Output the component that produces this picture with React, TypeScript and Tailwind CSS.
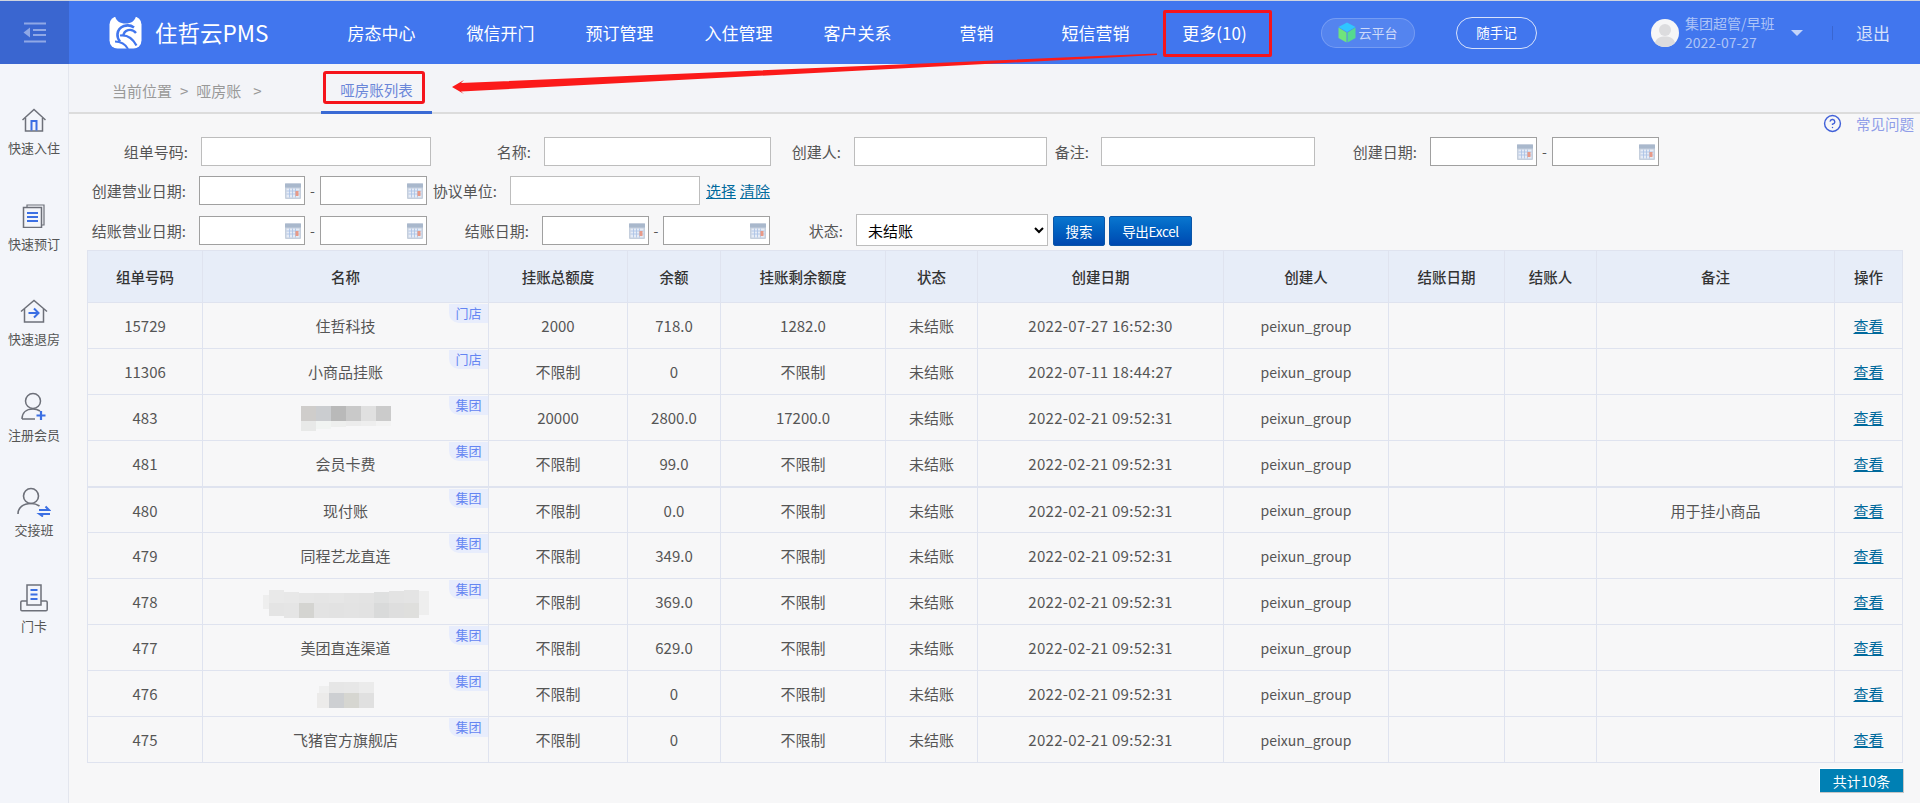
import React from 'react';
import { CircleHelp } from 'lucide-react';

const navItems = ['房态中心', '微信开门', '预订管理', '入住管理', '客户关系', '营销', '短信营销', '更多(10)'];

const GRAY = '#6d7079';
const BLUE = '#3b6fe3';

const HomeIcon = () => (
  <svg width="26" height="24" viewBox="0 0 26 24" fill="none">
    <path d="M1.5 12 13 1.5 24.5 12" stroke={GRAY} strokeWidth="1.5" />
    <path d="M4.5 10v13h17V10" stroke={GRAY} strokeWidth="1.5" />
    <path d="M10.5 22.5V13h5v9.5" stroke={BLUE} strokeWidth="2" />
  </svg>
);

const BookIcon = () => (
  <svg width="24" height="24" viewBox="0 0 24 24" fill="none">
    <path d="M5 3V1h17v20h-2" stroke={GRAY} strokeWidth="1.2" />
    <rect x="1.5" y="3.5" width="18" height="20" stroke={GRAY} strokeWidth="1.5" />
    <path d="M5 9h11M5 13h11M5 17h11" stroke={BLUE} strokeWidth="2" />
  </svg>
);

const CheckoutIcon = () => (
  <svg width="28" height="24" viewBox="0 0 28 24" fill="none">
    <path d="M1 12.5 14 1.5l13 11" stroke={GRAY} strokeWidth="1.5" />
    <path d="M4.5 10v13h19V10" stroke={GRAY} strokeWidth="1.5" />
    <path d="M8.5 14h9M14 9.5l4.5 4.5-4.5 4.500" stroke={BLUE} strokeWidth="2" />
  </svg>
);

const AddUserIcon = () => (
  <svg width="26" height="29" viewBox="0 0 26 29" fill="none">
    <circle cx="12" cy="9" r="7.5" stroke={GRAY} strokeWidth="1.5" />
    <path d="M1 27c0-6 4-10 11-10 3 0 5 .7 7 2M1 27h13" stroke={GRAY} strokeWidth="1.5" />
    <path d="M20 19v9M15.5 23.5h9" stroke={BLUE} strokeWidth="2.2" />
  </svg>
);

const ShiftIcon = () => (
  <svg width="34" height="30" viewBox="0 0 34 30" fill="none">
    <circle cx="14" cy="9" r="7.5" stroke={GRAY} strokeWidth="1.6" />
    <path d="M1 27c0-6.500 5-10.500 13-10.500 3.500 0 6 .8 8.500 2.500" stroke={GRAY} strokeWidth="1.6" />
    <path d="M22 23h10l-3.500-3.500M33 27H22.500l3.500 2.500" stroke={BLUE} strokeWidth="2" />
  </svg>
);

const CardIcon = () => (
  <svg width="28" height="28" viewBox="0 0 28 28" fill="none">
    <path d="M7 17H2c-.8 0-1.200.6-1.200 1.200v7.300c0 .8.600 1.300 1.200 1.300h24c.8 0 1.200-.6 1.200-1.300v-7.300c0-.7-.4-1.200-1.200-1.200h-5" stroke={GRAY} strokeWidth="1.5" />
    <path d="M7 21V1h14v20H7Z" stroke={GRAY} strokeWidth="1.500" />
    <path d="M10.500 6h7M10.500 10.500h7M10.500 15h7" stroke={BLUE} strokeWidth="1.800" />
  </svg>
);

const CalendarIcon = () => (
  <svg width="16" height="16" viewBox="0 0 16 16">
    <rect x="0" y="0.5" width="16" height="15.500" rx="1" fill="#c5cfdd" />
    <rect x="0" y="0.5" width="16" height="4" fill="#a9b8cc" />
    <rect x="1.500" y="5.500" width="13" height="9" fill="#e6ecf6" />
    <path d="M1.500 8h13M1.500 11h13M4.500 5.500v9M7.500 5.500v9M10.500 5.500v9" stroke="#a8c0e4" strokeWidth="0.800" />
    <rect x="10.500" y="8" width="3" height="5" fill="#e89a88" />
  </svg>
);

const Logo = () => (
  <svg width="33" height="33" viewBox="0 0 33 33" fill="none">
    <rect x="0.500" y="0.500" width="32" height="32" rx="8" fill="#fff" />
    <path d="M6 0c1 5 5 7.500 10.500 7.500S26 5 27 0Z" fill="#4176ee" />
    <path d="M25 11.500C19 7 9.500 10 8.500 18c-.3 3 .8 5.500 2.500 7.500" stroke="#4176ee" strokeWidth="2.600" />
    <path d="M14.500 20c0-6 8-8.500 12.500-3" stroke="#4176ee" strokeWidth="2.400" />
    <path d="M11 19.500c6.500-1 12.500 2.500 16.500 10" stroke="#4176ee" strokeWidth="2.200" />
    <path d="M6 25.500c5 0 10 2 13 7.500" stroke="#4176ee" strokeWidth="2" />
  </svg>
);

const CollapseIcon = () => (
  <svg width="24" height="21" viewBox="0 0 24 21" fill="none" stroke="#8fa8e6" strokeWidth="2">
    <path d="M1 1.500h22M10 8h13M10 13h13M1 19.500h22" />
    <path d="M7 5.500v10L0.500 10.500 7 5.500Z" fill="#8fa8e6" stroke="none" />
  </svg>
);

const CubeIcon = () => (
  <svg width="18" height="21" viewBox="0 0 18 21">
    <path d="M9 0.500 17.500 5 9 10 0.500 5 9 0.500Z" fill="#2fc6ff" />
    <path d="M0.500 5.500 8.500 10.500v10L0.500 16V5.500Z" fill="#6fe47c" />
    <path d="M17.500 5.500 9.500 10.500v10l8-4.500V5.500Z" fill="#55d98f" />
  </svg>
);

const Avatar = () => (
  <svg width="28" height="28" viewBox="0 0 28 28">
    <ellipse cx="14" cy="14" rx="14" ry="14" fill="#f6f6f7" />
    <circle cx="14" cy="11" r="6" fill="#dcdcde" />
    <path d="M4 24c1-5 5-6.500 10-6.500S23 19 24 24c-2.500 2.500-6 4-10 4s-7.500-1.500-10-4Z" fill="#dcdcde" />
  </svg>
);

// 打码的名称，色块宽 15px
const Mosaic = ({ width, height, cells }: { width: number; height: number; cells: [number, number, number, number, string][] }) => (
  <svg width={width} height={height} viewBox={`0 0 ${width} ${height}`} className="mx-auto block">
    {cells.map(([x, y, w, h, c], i) => (
      <rect key={i} x={x} y={y} width={w} height={h} fill={c} />
    ))}
  </svg>
);

const mosaic483 = (
  <Mosaic
    width={90}
    height={25}
    cells={[
      [0, 0, 15, 15, '#cfcdcb'], [15, 0, 15, 15, '#cbcdd0'], [30, 0, 15, 15, '#b9b9b9'],
      [45, 0, 15, 15, '#c9c9c9'], [60, 0, 15, 15, '#e0e0e0'], [75, 0, 15, 15, '#cbcbcb'],
      [0, 15, 15, 10, '#e8e9e8'], [15, 15, 15, 8, '#f1f4f2'], [30, 15, 15, 6, '#eeefee'],
      [45, 15, 15, 5, '#ececec'], [60, 15, 15, 5, '#eeeeee'], [75, 15, 15, 5, '#f3f3f3'],
    ]}
  />
);

const mosaic478 = (
  <Mosaic
    width={170}
    height={30}
    cells={[
      [8, 2, 15, 13, '#e9e9e9'], [23, 4, 15, 11, '#e8e8e8'], [38, 5, 15, 10, '#e6e6e6'], [53, 5, 15, 10, '#e5e5e5'],
      [68, 5, 15, 10, '#e6e6e6'], [83, 5, 15, 10, '#e4e4e4'], [98, 5, 15, 10, '#e3e3e3'], [113, 4, 15, 11, '#dfe0e0'],
      [128, 3, 15, 12, '#e3e3e3'], [143, 2, 15, 13, '#e4e4e4'], [158, 3, 10, 12, '#eeeeee'], [2, 7, 6, 14, '#eeeeee'],
      [8, 15, 15, 13, '#e4e4e4'], [23, 15, 15, 15, '#e5e5e5'], [38, 15, 15, 15, '#d4d4d1'], [53, 15, 15, 15, '#e3e3e3'],
      [68, 15, 15, 15, '#e2e2e2'], [83, 15, 15, 15, '#e3e3e3'], [98, 15, 15, 15, '#e2e2e2'], [113, 15, 15, 15, '#d9dada'],
      [128, 15, 15, 15, '#dedede'], [143, 15, 15, 15, '#dfdfdd'], [158, 15, 10, 12, '#eeeeee'],
    ]}
  />
);

const mosaic476 = (
  <Mosaic
    width={58}
    height={27}
    cells={[
      [12, 1, 15, 11, '#e6e6e6'], [27, 1, 15, 11, '#e7e7e7'], [42, 1, 15, 11, '#ebebeb'], [2, 5, 10, 7, '#efefef'],
      [0, 12, 12, 15, '#ecebea'], [12, 12, 15, 15, '#cdcfd2'], [27, 12, 15, 15, '#d6d6d1'], [42, 12, 15, 15, '#e0e0e0'],
    ]}
  />
);

const rows = [
  { id: '15729', name: '住哲科技', tag: '门店', total: '2000', balance: '718.0', left: '1282.0', date: '2022-07-27 16:52:30' },
  { id: '11306', name: '小商品挂账', tag: '门店', total: '不限制', balance: '0', left: '不限制', date: '2022-07-11 18:44:27' },
  { id: '483', name: mosaic483, tag: '集团', total: '20000', balance: '2800.0', left: '17200.0', date: '2022-02-21 09:52:31' },
  { id: '481', name: '会员卡费', tag: '集团', total: '不限制', balance: '99.0', left: '不限制', date: '2022-02-21 09:52:31' },
  { id: '480', name: '现付账', tag: '集团', total: '不限制', balance: '0.0', left: '不限制', date: '2022-02-21 09:52:31', remark: '用于挂小商品' },
  { id: '479', name: '同程艺龙直连', tag: '集团', total: '不限制', balance: '349.0', left: '不限制', date: '2022-02-21 09:52:31' },
  { id: '478', name: mosaic478, tag: '集团', total: '不限制', balance: '369.0', left: '不限制', date: '2022-02-21 09:52:31' },
  { id: '477', name: '美团直连渠道', tag: '集团', total: '不限制', balance: '629.0', left: '不限制', date: '2022-02-21 09:52:31' },
  { id: '476', name: mosaic476, tag: '集团', total: '不限制', balance: '0', left: '不限制', date: '2022-02-21 09:52:31' },
  { id: '475', name: '飞猪官方旗舰店', tag: '集团', total: '不限制', balance: '0', left: '不限制', date: '2022-02-21 09:52:31' },
];

const columns = [
  { title: '组单号码', width: 115 },
  { title: '名称', width: 286 },
  { title: '挂账总额度', width: 139 },
  { title: '余额', width: 93 },
  { title: '挂账剩余额度', width: 165 },
  { title: '状态', width: 92 },
  { title: '创建日期', width: 246 },
  { title: '创建人', width: 165 },
  { title: '结账日期', width: 116 },
  { title: '结账人', width: 92 },
  { title: '备注', width: 238 },
  { title: '操作', width: 68 },
];

const sideItems = [
  { label: '快速入住', icon: <HomeIcon /> },
  { label: '快速预订', icon: <BookIcon /> },
  { label: '快速退房', icon: <CheckoutIcon /> },
  { label: '注册会员', icon: <AddUserIcon /> },
  { label: '交接班', icon: <ShiftIcon /> },
  { label: '门卡', icon: <CardIcon /> },
];

const Label = ({ className, children }: { className: string; children: React.ReactNode }) => (
  <label className={`shrink-0 text-right text-[15px] leading-[29px] text-[#555] ${className}`}>{children}</label>
);

const TextInput = ({ className }: { className: string }) => (
  <input type="text" className={`shrink-0 h-[29px] border border-[#bdbdbd] bg-white ${className}`} />
);

const DateInput = ({ className }: { className: string }) => (
  <div className={`shrink-0 h-[29px] flex items-center border border-[#a0a0a0] bg-white pr-[3px] ${className}`}>
    <input type="text" className="min-w-0 flex-1 h-full" />
    <CalendarIcon />
  </div>
);

const Dash = ({ className }: { className: string }) => (
  <span className={`shrink-0 text-center text-[14px] leading-[29px] text-[#555] ${className}`}>-</span>
);

const cellBase = 'border border-[#dfe3ef] pt-[2px] text-center text-[#555] font-normal';

export default function App() {
  return (
    <div className="relative w-[1920px] h-[803px] overflow-hidden flex flex-col bg-[#f7f7f8] font-[family-name:'Noto_Sans_CJK_SC','Noto_Sans',sans-serif]">
      {/* 顶部导航 */}
      <header className="h-[64px] shrink-0 border-t border-[#cfd4de] flex items-center bg-[#4176ee]">
        <div className="w-[69px] h-full shrink-0 flex items-center justify-center bg-[#3a66d0]">
          <CollapseIcon />
        </div>
        <div className="ml-[40px] w-[33px] shrink-0"><Logo /></div>
        <div className="ml-[13px] w-[167px] shrink-0 text-[22.500px] text-white">住哲云PMS</div>
        {navItems.map((item) => (
          <div key={item} className="w-[119px] shrink-0 text-center text-[17px] text-white">{item}</div>
        ))}
        <div className="ml-[47px] w-[94px] h-[30px] shrink-0 flex items-center justify-center gap-[2px] rounded-full border border-white/20 bg-white/10 text-[13px] text-[#cddafa]">
          <CubeIcon />
          <span>云平台</span>
        </div>
        <div className="ml-[41px] w-[81px] h-[32px] shrink-0 flex items-center justify-center rounded-full border border-[#d8e2fb] text-[13.500px] text-white">随手记</div>
        <div className="ml-[114px] shrink-0"><Avatar /></div>
        <div className="ml-[6px] w-[94px] shrink-0 text-[14px] leading-[19px] text-[#aec4f7]">
          <div>集团超管/早班</div>
          <div>2022-07-27</div>
        </div>
        <svg className="ml-[12px] shrink-0" width="12" height="6" viewBox="0 0 12 6"><path d="M0 0h12L6 6Z" fill="#c3d3f9" /></svg>
        <div className="ml-[29px] h-[14px] w-px shrink-0 bg-[#3a66d0]" />
        <div className="ml-[23px] shrink-0 text-[17px] text-[#d6e1fb]">退出</div>
      </header>

      <div className="flex flex-1 min-h-0">
        {/* 左侧快捷栏 */}
        <aside className="w-[69px] shrink-0 border-r border-[#e3e6ee] bg-[#f3f5fa] pt-[36px]">
          {sideItems.map((item) => (
            <div key={item.label} className="h-[95.600px] pt-[4px] flex flex-col items-center">
              <div className="h-[32px] flex items-center justify-center">{item.icon}</div>
              <div className="mt-[2px] text-[13px] leading-[20px] text-[#555]">{item.label}</div>
            </div>
          ))}
        </aside>

        <main className="relative flex-1 min-w-0">
          {/* 面包屑 */}
          <div className="h-[50px] border-b-2 border-[#dcdcdc] bg-[#f3f4f8] flex text-[15px] text-[#999]">
            <div className="ml-[43px] w-[209px] shrink-0 pt-[17px] leading-[20px] flex">
              <span>当前位置</span>
              <span className="ml-[8px]">&gt;</span>
              <span className="ml-[8px]">哑房账</span>
              <span className="ml-[12px]">&gt;</span>
            </div>
            <div className="h-[50px] w-[111px] shrink-0 border-b-[3px] border-[#3a6ad4] pt-[16px] text-center leading-[20px] text-[14.500px] text-[#6a86d8]">
              哑房账列表
            </div>
          </div>

          <div className="absolute right-[6px] top-[49px] flex items-center gap-[14px] text-[14.500px] text-[#8f9de8]">
            <CircleHelp size={19} strokeWidth={1.800} color="#4060d8" />
            <span>常见问题</span>
          </div>

          {/* 查询条件 */}
          <div className="pt-[23px] flex items-start">
            <Label className="w-[119px]">组单号码:</Label>
            <TextInput className="ml-[13px] w-[230px]" />
            <Label className="w-[100px]">名称:</Label>
            <TextInput className="ml-[13px] w-[227px]" />
            <Label className="w-[70px]">创建人:</Label>
            <TextInput className="ml-[13px] w-[193px]" />
            <Label className="w-[42px]">备注:</Label>
            <TextInput className="ml-[12px] w-[214px]" />
            <Label className="w-[102px]">创建日期:</Label>
            <DateInput className="ml-[13px] w-[107px]" />
            <Dash className="w-[15px]" />
            <DateInput className="w-[107px]" />
          </div>
          <div className="mt-[10px] h-[30px] flex items-start">
            <Label className="w-[117px]">创建营业日期:</Label>
            <DateInput className="ml-[13px] w-[106px]" />
            <Dash className="w-[15px]" />
            <DateInput className="w-[107px]" />
            <Label className="w-[70px]">协议单位:</Label>
            <TextInput className="ml-[13px] w-[190px]" />
            <a className="ml-[6px] text-[15px] leading-[29px] text-[#00699c] underline">选择</a>
            <a className="ml-[4px] text-[15px] leading-[29px] text-[#00699c] underline">清除</a>
          </div>
          <div className="mt-[10px] h-[30px] flex items-start">
            <Label className="w-[117px]">结账营业日期:</Label>
            <DateInput className="ml-[13px] w-[106px]" />
            <Dash className="w-[15px]" />
            <DateInput className="w-[107px]" />
            <Label className="w-[102px]">结账日期:</Label>
            <DateInput className="ml-[13px] w-[107px]" />
            <Dash className="w-[14px]" />
            <DateInput className="w-[107px]" />
            <Label className="w-[73px]">状态:</Label>
            <select className="ml-[13px] -mt-[2px] w-[192px] h-[32px] shrink-0 border border-[#bdbdbd] bg-white pl-[7px] text-[15px] text-black">
              <option>未结账</option>
            </select>
            <button className="ml-[5px] w-[52px] h-[30px] shrink-0 rounded-[2px] border border-[#0a56a8] bg-gradient-to-b from-[#0a76cf] to-[#0048b0] text-[13.500px] text-white">搜索</button>
            <button className="ml-[4px] w-[83px] h-[30px] shrink-0 rounded-[2px] border border-[#0a56a8] bg-gradient-to-b from-[#0a76cf] to-[#0048b0] text-[13.500px] tracking-[-0.300px] text-white">导出Excel</button>
          </div>

          {/* 列表 */}
          <table className="mt-[4px] ml-[18px] w-[1815px] table-fixed border-collapse">
            <colgroup>
              {columns.map((c) => (
                <col key={c.title} style={{ width: c.width }} />
              ))}
            </colgroup>
            <thead>
              <tr className="h-[52px] bg-[#e7edf8]">
                {columns.map((c) => (
                  <th key={c.title} className="border border-[#dfe3ef] text-center text-[14.500px] font-medium text-[#333]">{c.title}</th>
                ))}
              </tr>
            </thead>
            <tbody>
              {rows.map((r) => {
                const heavy = r.id === '481' ? ' border-b-2' : '';
                const cell = `${cellBase} text-[15px]${heavy}`;
                return (
                  <tr key={r.id} className="h-[46px]">
                    <td className={cell}>{r.id}</td>
                    <td className={`relative ${cell}`}>
                      <span className="absolute right-0 top-px w-[39px] h-[19px] rounded-bl-[10px] bg-[#e8edfc] text-center text-[13px] leading-[17px] text-[#6485f2]">{r.tag}</span>
                      {r.name}
                    </td>
                    <td className={cell}>{r.total}</td>
                    <td className={cell}>{r.balance}</td>
                    <td className={cell}>{r.left}</td>
                    <td className={cell}>未结账</td>
                    <td className={`${cell} tracking-[0.300px]`}>{r.date}</td>
                    <td className={`${cellBase} text-[14px]${heavy}`}>peixun_group</td>
                    <td className={cell} />
                    <td className={cell} />
                    <td className={cell}>{r.remark}</td>
                    <td className={cell}><a className="text-[#00699c] underline">查看</a></td>
                  </tr>
                );
              })}
            </tbody>
          </table>

          <div className="mt-[5px] mr-[17px] flex justify-end">
            <div className="w-[84px] h-[24px] border-l border-t border-white bg-[#0080b4] text-center text-[14px] leading-[24px] text-white shadow-[1px_1px_0_#c5c5c5]">共计10条</div>
          </div>
        </main>
      </div>

      {/* 标注：红框和箭头 */}
      <div className="absolute left-[1163px] top-[10px] w-[109px] h-[47px] rounded-[2px] border-[3px] border-[#f5141c]" />
      <div className="absolute left-[323px] top-[71px] w-[102px] h-[33px] rounded-[3px] border-[3px] border-[#f5141c]" />
      <svg className="absolute left-0 top-0 pointer-events-none" width="1920" height="803" viewBox="0 0 1920 803">
        <polygon points="452,87 464,80 461,83 1157,53.500 1157,55 461,91.500 464,94" fill="#fb1a1a" />
      </svg>
    </div>
  );
}
